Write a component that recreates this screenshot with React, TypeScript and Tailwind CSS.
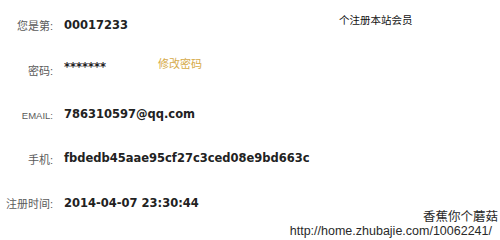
const LABEL_FONT = { fontFamily: '"Liberation Sans", "Noto Sans CJK SC", sans-serif' };
const VALUE_FONT = { fontFamily: '"DejaVu Sans", "Liberation Sans", sans-serif' };

function Row({ label, labelClass = "text-[11px]", children }: { label: string; labelClass?: string; children: React.ReactNode }) {
  return (
    <div className="flex h-[44.5px] items-center">
      <span className={`w-[53px] shrink-0 pt-[3px] text-right leading-none text-[#5a5a5a] ${labelClass}`} style={LABEL_FONT}>
        {label}
      </span>
      <div className="ml-[11px] flex items-center">{children}</div>
    </div>
  );
}

function Value({ children, className = "" }: { children: React.ReactNode; className?: string }) {
  return (
    <span className={`text-[11.5px] font-bold leading-none text-[#222] ${className}`} style={VALUE_FONT}>
      {children}
    </span>
  );
}

export default function App() {
  return (
    <div className="relative h-[240px] w-[500px] overflow-hidden bg-white">
      <div className="flex flex-col pt-[3px]">
        <Row label="您是第:">
          <Value className="w-[275px]">00017233</Value>
          <span className="-mt-[11px] text-[10.5px] leading-none text-[#111]" style={LABEL_FONT}>
            个注册本站会员
          </span>
        </Row>
        <Row label="密码:">
          <Value className="-mt-[4px] w-[94px]">*******</Value>
          <span className="-mt-[10px] text-[11px] leading-none text-[#d6aa48]" style={LABEL_FONT}>
            修改密码
          </span>
        </Row>
        <Row label="EMAIL:" labelClass="text-[9.5px]">
          <Value>786310597@qq.com</Value>
        </Row>
        <Row label="手机:">
          <Value>fbdedb45aae95cf27c3ced08e9bd663c</Value>
        </Row>
        <Row label="注册时间:">
          <Value>2014-04-07 23:30:44</Value>
        </Row>
      </div>

      {/* watermark */}
      <div className="absolute bottom-[3px] right-[2px] flex flex-col items-end text-[#2a2a2a]" style={LABEL_FONT}>
        <span className="mb-[2px] block h-[12px] text-[12.5px] leading-[12px]">香蕉你个蘑菇</span>
        <span className="mr-[6px] block h-[12px] text-[12.5px] leading-[12px]">http://home.zhubajie.com/10062241/</span>
      </div>
    </div>
  );
}
